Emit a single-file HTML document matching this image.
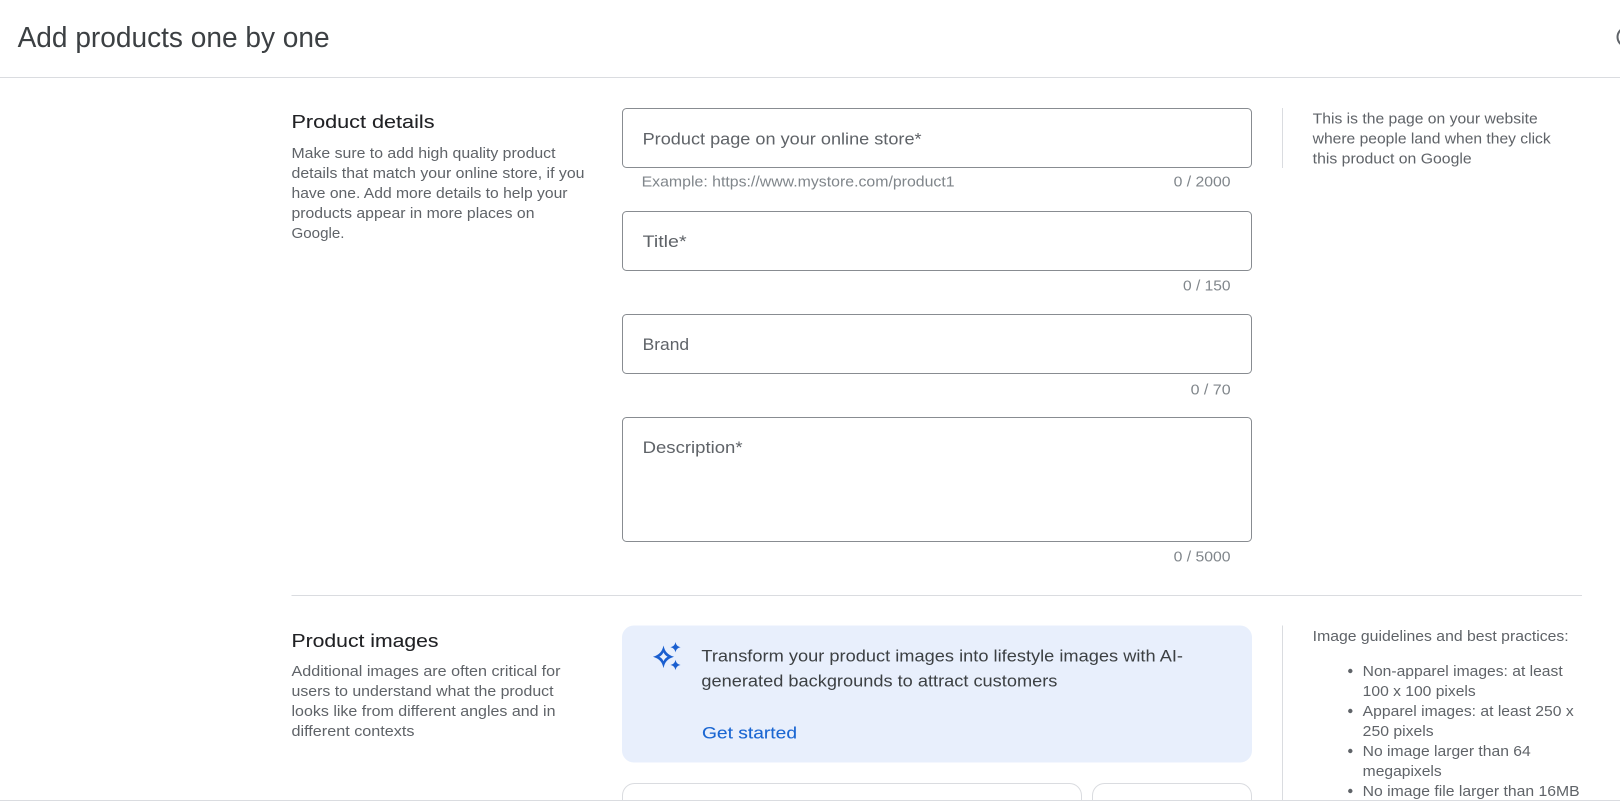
<!DOCTYPE html>
<html>
<head>
<meta charset="utf-8">
<title>Add products one by one</title>
<style>
html,body{margin:0;padding:0;background:#fff;width:1620px;height:801px;overflow:hidden}
svg{display:block}
text{font-family:"Liberation Sans",sans-serif;white-space:pre}
.b{font-size:14.5px;fill:#5f6368}
.h{font-size:18.5px;fill:#202124;stroke:#202124;stroke-width:.08px}
.p{font-size:16.5px;fill:#5f6368}
.c{font-size:14.5px;fill:#80868b}
.t{font-size:16.5px;fill:#3c4043}
</style>
</head>
<body>
<svg width="1620" height="801" viewBox="0 0 1620 801" xmlns="http://www.w3.org/2000/svg">
<rect width="1620" height="801" fill="#fff"/>

<text x="17.6" y="47" font-size="28.5" fill="#3c4043" textLength="312" lengthAdjust="spacingAndGlyphs">Add products one by one</text>
<rect x="0" y="77" width="1620" height="1" fill="#dadce0"/>
<circle cx="1627" cy="37" r="9.5" fill="none" stroke="#5f6368" stroke-width="2"/>

<text class="h" x="291.5" y="128" textLength="143" lengthAdjust="spacingAndGlyphs">Product details</text>
<text class="b" x="291.5" y="158" textLength="264" lengthAdjust="spacingAndGlyphs">Make sure to add high quality product</text>
<text class="b" x="291.5" y="178" textLength="293" lengthAdjust="spacingAndGlyphs">details that match your online store, if you</text>
<text class="b" x="291.5" y="198" textLength="276" lengthAdjust="spacingAndGlyphs">have one. Add more details to help your</text>
<text class="b" x="291.5" y="218" textLength="243" lengthAdjust="spacingAndGlyphs">products appear in more places on</text>
<text class="b" x="291.5" y="238" textLength="53" lengthAdjust="spacingAndGlyphs">Google.</text>

<rect x="622.5" y="108.5" width="629" height="59" rx="4" fill="#fff" stroke="#888c91"/>
<text class="p" x="642.6" y="144.5" textLength="279" lengthAdjust="spacingAndGlyphs">Product page on your online store*</text>
<text class="c" x="641.6" y="186.5" textLength="313" lengthAdjust="spacingAndGlyphs">Example: https://www.mystore.com/product1</text>
<text class="c" x="1173.6" y="186.5" textLength="57" lengthAdjust="spacingAndGlyphs">0 / 2000</text>

<rect x="622.5" y="211.5" width="629" height="59" rx="4" fill="#fff" stroke="#888c91"/>
<text class="p" x="642.6" y="247" textLength="44" lengthAdjust="spacingAndGlyphs">Title*</text>
<text class="c" x="1183" y="290.5" textLength="47.5" lengthAdjust="spacingAndGlyphs">0 / 150</text>

<rect x="622.5" y="314.5" width="629" height="59" rx="4" fill="#fff" stroke="#888c91"/>
<text class="p" x="642.6" y="350" textLength="46.5" lengthAdjust="spacingAndGlyphs">Brand</text>
<text class="c" x="1190.6" y="394.5" textLength="40" lengthAdjust="spacingAndGlyphs">0 / 70</text>

<rect x="622.5" y="417.5" width="629" height="124" rx="4" fill="#fff" stroke="#888c91"/>
<text class="p" x="642.6" y="453" textLength="100" lengthAdjust="spacingAndGlyphs">Description*</text>
<text class="c" x="1173.6" y="561.5" textLength="57" lengthAdjust="spacingAndGlyphs">0 / 5000</text>

<rect x="1282" y="108" width="1" height="60" fill="#dadce0"/>
<text class="b" x="1312.7" y="123.5" textLength="225" lengthAdjust="spacingAndGlyphs">This is the page on your website</text>
<text class="b" x="1312.7" y="143.5" textLength="238" lengthAdjust="spacingAndGlyphs">where people land when they click</text>
<text class="b" x="1312.7" y="163.5" textLength="159" lengthAdjust="spacingAndGlyphs">this product on Google</text>

<rect x="291.5" y="595" width="1290.5" height="1" fill="#dadce0"/>

<text class="h" x="291.5" y="647" textLength="147" lengthAdjust="spacingAndGlyphs">Product images</text>
<text class="b" x="291.5" y="676" textLength="269" lengthAdjust="spacingAndGlyphs">Additional images are often critical for</text>
<text class="b" x="291.5" y="696" textLength="262" lengthAdjust="spacingAndGlyphs">users to understand what the product</text>
<text class="b" x="291.5" y="716" textLength="264" lengthAdjust="spacingAndGlyphs">looks like from different angles and in</text>
<text class="b" x="291.5" y="736" textLength="123" lengthAdjust="spacingAndGlyphs">different contexts</text>

<rect x="622" y="625.5" width="630" height="137" rx="12" fill="#e8effc"/>
<path fill="#1a5fd0" fill-rule="evenodd" d="M663.5 645.5C665 651.8 667.4 654.6 674 656.8C667.4 659 665 661.8 663.5 668.1C662 661.8 659.6 659 653 656.8C659.6 654.6 662 651.8 663.5 645.5ZM663.5 652.4C662.7 654.2 661.3 655.7 659.4 656.8C661.3 657.9 662.7 659.4 663.5 661.2C664.3 659.4 665.7 657.9 667.6 656.8C665.7 655.7 664.3 654.2 663.5 652.4Z"/>
<path fill="#1a5fd0" d="M675.5 642C676.1 645 677.5 646.5 680.6 647.2C677.5 647.9 676.1 649.4 675.5 652.4C674.9 649.4 673.5 647.9 670.4 647.2C673.5 646.5 674.9 645 675.5 642Z"/>
<path fill="#1a5fd0" d="M675.5 659.8C676.1 662.8 677.5 664.3 680.6 665C677.5 665.7 676.1 667.2 675.5 670.2C674.9 667.2 673.5 665.7 670.4 665C673.5 664.3 674.9 662.8 675.5 659.8Z"/>
<text class="t" x="701.4" y="661.5" textLength="481.6" lengthAdjust="spacingAndGlyphs">Transform your product images into lifestyle images with AI-</text>
<text class="t" x="701.4" y="686.5" textLength="356" lengthAdjust="spacingAndGlyphs">generated backgrounds to attract customers</text>
<text x="702" y="738.5" font-size="16.5" fill="#1a66d2" stroke="#1a66d2" stroke-width="0.1" textLength="95" lengthAdjust="spacingAndGlyphs">Get started</text>

<rect x="622.5" y="783.5" width="459" height="40" rx="12" fill="#fff" stroke="#dadce0"/>
<rect x="1092.5" y="783.5" width="159" height="40" rx="12" fill="#fff" stroke="#dadce0"/>

<rect x="1282" y="625.5" width="1" height="175" fill="#dadce0"/>
<text class="b" x="1312.7" y="641" textLength="256" lengthAdjust="spacingAndGlyphs">Image guidelines and best practices:</text>
<circle cx="1350.3" cy="671" r="2.2" fill="#5f6368"/>
<text class="b" x="1362.7" y="676" textLength="200" lengthAdjust="spacingAndGlyphs">Non-apparel images: at least</text>
<text class="b" x="1362.7" y="696" textLength="113" lengthAdjust="spacingAndGlyphs">100 x 100 pixels</text>
<circle cx="1350.3" cy="711" r="2.2" fill="#5f6368"/>
<text class="b" x="1362.7" y="716" textLength="211" lengthAdjust="spacingAndGlyphs">Apparel images: at least 250 x</text>
<text class="b" x="1362.7" y="736" textLength="71" lengthAdjust="spacingAndGlyphs">250 pixels</text>
<circle cx="1350.3" cy="751" r="2.2" fill="#5f6368"/>
<text class="b" x="1362.7" y="756" textLength="168" lengthAdjust="spacingAndGlyphs">No image larger than 64</text>
<text class="b" x="1362.7" y="776" textLength="79" lengthAdjust="spacingAndGlyphs">megapixels</text>
<circle cx="1350.3" cy="791" r="2.2" fill="#5f6368"/>
<text class="b" x="1362.7" y="796" textLength="217" lengthAdjust="spacingAndGlyphs">No image file larger than 16MB</text>

<rect x="0" y="800" width="1620" height="1" fill="#dadce0"/>
</svg>
</body>
</html>
